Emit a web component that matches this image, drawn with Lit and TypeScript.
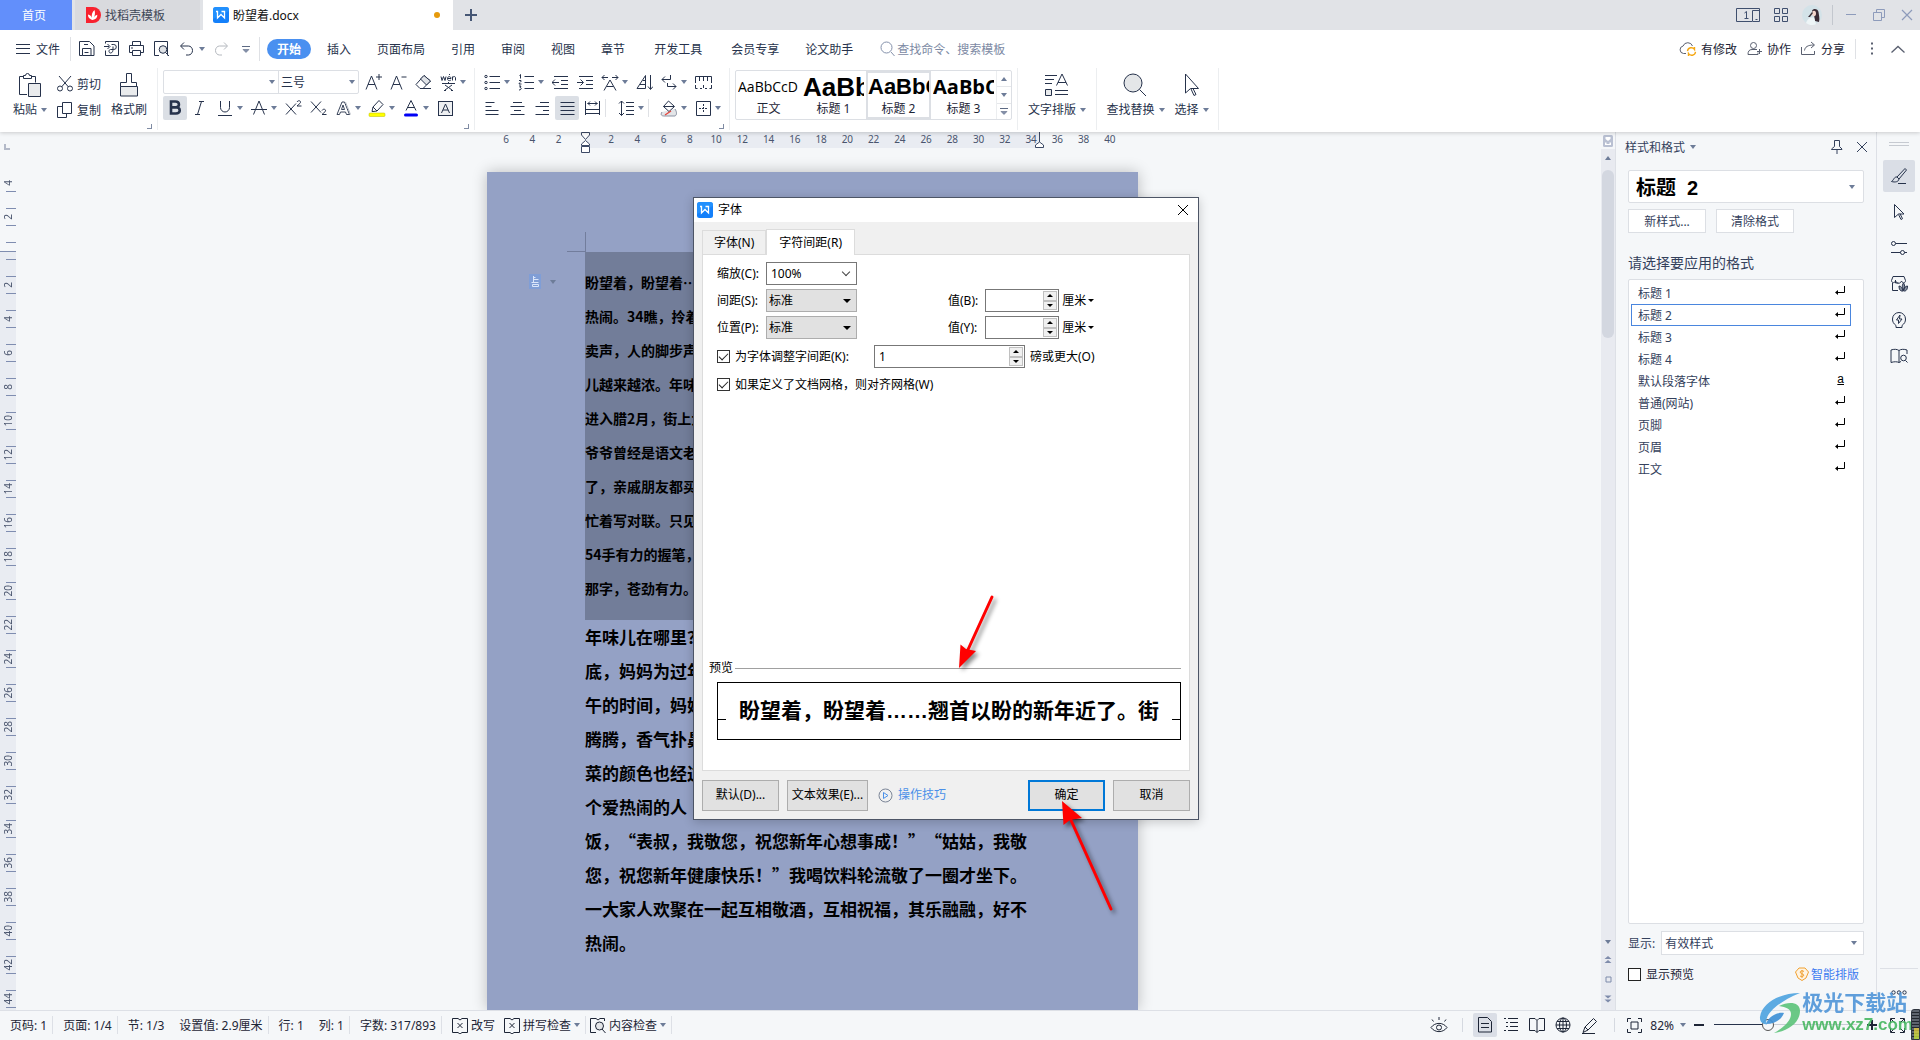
import { LitElement, html, css, svg, nothing, TemplateResult } from "lit";
import { customElement } from "lit/decorators.js";
import { classMap } from "lit/directives/class-map.js";

/* Icon bodies: [width, height, content] */
const ICONS: Record<string, [number, number, any]> = {
  w: [16, 16, svg`<rect width="16" height="16" rx="2.500" fill="#1480fa" stroke="none"/><path d="M0 2.500A2.500 2.500 0 0 1 2.500 0h11A2.500 2.500 0 0 1 16 2.500V4L0 12z" fill="#2b9bff" opacity=".6" stroke="none"/><path d="M3 4.500h1.500V11L8 7.500l3.500 3.500V4.500H8.500" stroke="#fff" stroke-width="1.300"/>`],
  docer: [16, 16, svg`<path d="M1 0h7a8 8 0 0 1 0 16H1z" fill="#f8222f" stroke="none"/><path d="M7.500 13C3.500 11.500 3 9.500 3 7.500c2 .3 3.600 1.800 4 3.500C6.300 8 7 5 9.500 3c1 3 .3 6-.8 8 .8-1.700 2-2.800 3.600-3.200.2 2.700-1.300 4.600-4.800 5.200z" fill="#fff" stroke="none"/>`],
  plus: [12, 12, svg`<path d="M6 0v12M0 6h12" stroke="#465775" stroke-width="2"/>`],
  task: [24, 14, svg`<path d="M16 13.500H.5V.5h23v13H16.500V2.500H23"/><path d="M19.500 11.500h2M8.500 5l2-1.500v7M8.500 10.500h4"/>`],
  grid4: [14, 14, svg`<path d="M.5.5h5v5h-5zM8.500.5h5v5h-5zM.5 8.500h5v5h-5zM8.500 8.500h5v5h-5z"/>`],
  avatar: [20, 20, svg`<circle cx="10" cy="10" r="10" fill="#d3e2e8" stroke="none"/><path d="M10 6c1-3 6-2.500 6.500 1 .3 3 1.500 6 .5 10l-4-1-1-6z" fill="#3a2b35" stroke="none"/><ellipse cx="12" cy="8.500" rx="2" ry="2.800" fill="#f3d6cc" stroke="none"/><path d="M4 18c1-4 4-6 8-5.500l2 6.500a9.500 9.500 0 0 1-10-1z" fill="#eef5f7" stroke="none"/><path d="M6 12 10 7l1 1-3 4z" fill="#3a3038" stroke="none"/>`],
  min: [12, 12, svg`<path d="M1 5.500h10" stroke="#8d9bbb"/>`],
  restore: [12, 12, svg`<path d="M.5 3.500h8v8h-8zM3.500 3V.5h8v8H9" stroke="#8d9bbb"/>`],
  closeLight: [12, 12, svg`<path d="M1 1l10 10M11 1 1 11" stroke="#8d9bbb" stroke-width="1.200"/>`],
  menu: [14, 12, svg`<path d="M0 1.500h14M0 5.500h14M0 10.500h14" />`],
  save: [16, 16, svg`<path d="M.5 14.500V.5h10l4.500 4.500v9.500h-3M.5 14.500h3v-7h8.500v7H3.500M5 3.500h4M5.500 11.500h4"/>`],
  pdf: [16, 16, svg`<path d="M1.500 9.500v5h13V.5h-13v2M0 5.500h5M3.500 3l2.500 2.500L3.500 8M7.500 3.500h2.300a2.500 2.500 0 0 1 0 5H6.500c-2 0-2 3.500 0 3.500s2.500-2 2.500-4V5.500"/>`],
  print: [16, 16, svg`<path d="M3.500 4.500v-4h8v4M3.500 11.500h-3v-7h14v7h-3M3.500 9.500h8v5h-8zM2 7h2"/>`],
  preview: [16, 16, svg`<path d="M5 14.500H.5V.5h13v14"/><circle cx="9" cy="8.500" r="3.800" fill="#dfe2e6"/><path d="m11.500 11.500 3.500 3.500"/>`],
  undo: [16, 16, svg`<path d="M5 1.500 1.500 5 5 8.500M2 5h7.500a4 4.500 0 0 1 0 9H7"/>`],
  redo: [16, 16, svg`<path d="M11 1.500 14.500 5 11 8.500M14 5H6.500a4 4.500 0 0 0 0 9H9" stroke="#b4b8be"/>`],
  more: [10, 9, svg`<path d="M1 1.500h8" stroke="#5d6a84"/><path d="M2 4.500h6L5 7.500z" fill="#8390aa" stroke="#5d6a84" stroke-width=".6"/>`],
  search: [16, 16, svg`<circle cx="6.500" cy="6.500" r="5.500" stroke="#8491ab"/><path d="m11 11 3.500 4" stroke="#8491ab"/>`],
  cloud: [18, 16, svg`<path d="M7 12.500H4.500a3.800 3.800 0 0 1-.4-7.500A5 5 0 0 1 13.500 5" stroke="#5a6070"/><path d="M8.500 10a3.800 3.800 0 0 1 7-1.500V6M16.500 11a3.800 3.800 0 0 1-7 1.500V15" stroke="#f5a712" stroke-width="1.400"/>`],
  collab: [16, 16, svg`<circle cx="6.500" cy="4.500" r="3" stroke="#5a6070"/><path d="M10 8.500H5c-3 0-4 2-4 5h10v-2M10 10.500h5M12.500 8v5" stroke="#5a6070"/>`],
  share: [16, 16, svg`<path d="M.5 6v7.500h13V10M3.500 9.500C4 6 6.500 4 13 4M10 1l3.500 3-3.500 3" stroke="#5a6070"/>`],
  dots: [3, 14, svg`<path d="M0 1.500h2M0 6.500h2M0 11.500h2" stroke="#5a6070" stroke-width="2"/>`],
  up: [14, 8, svg`<path d="m.5 7.500 6.500-6 6.500 6" stroke="#5a6070" stroke-width="1.300"/>`],
  paste: [22, 24, svg`<path d="M8 21.500H.5V3.500h4m8 0h4v6M4.500 2.500h2a2 2 0 0 1 4 0h2v3h-8z"/><path d="M9.500 10.500h12v13h-12z" fill="#e9ebed"/>`],
  cut: [16, 16, svg`<path d="M2 0l9.500 11M14 0 4.500 11"/><circle cx="3" cy="12.500" r="2.500"/><circle cx="13" cy="12.500" r="2.500"/>`],
  copy: [16, 16, svg`<path d="M5.500.5h9v11h-9zM5.500 4.500h-5v11h9v-4"/>`],
  brush: [18, 24, svg`<path d="M6.500.5h5v9h5v4H.5v-4h6z"/><path d="M.5 13.500h17v9.500h-17z" fill="#e9ebed"/>`],
  aplus: [17, 17, svg`<path d="M1 15.500 6.500 2l5.500 13.500M3 10.500h7M14 0v6M11 3h6"/>`],
  aminus: [17, 17, svg`<path d="M1 15.500 6.500 2l5.500 13.500M3 10.500h7M11.500 3h5"/>`],
  eraser: [17, 17, svg`<path d="M9 1.500 15.500 7 8 14.500H5L1 10.500z"/><path d="M9 1.500 15.500 7 11.500 11 5.500 5z" fill="#dfe2e6"/><path d="M7 14.500h9"/>`],
  wen: [17, 17, svg`<path d="M1 2.500l1 4 1.500-4 1.500 4 1-4M7.500 4.500h3.500c0-2.500-3.500-2.500-3.500 0s2 2.500 3.500 1.500M9 1l1-1M12.500 6.500v-4M12.500 4c.5-2 3-2 3 0v2.500M2 9.500h13M8.500 8v1.500M5 11l7 5M12 11l-7 5M4 16.500h2M11 16.500h2"/>`],
  bold: [14, 16, svg`<path d="M3 1.500v12h5c5 0 5-6 0-6.200C12 7 12 1.500 7.500 1.500zM3 7.400h5" stroke-width="2.600"/>`],
  italic: [14, 16, svg`<path d="M6 1.500h5M2 14.500h5M8.500 1.500l-4 13"/>`],
  under: [16, 17, svg`<path d="M3.500 1v6.500a4.500 4.500 0 0 0 9 0V1M1 15.500h14"/>`],
  strike: [16, 16, svg`<path d="M2.500 14.500 8 1l5.500 13.500M0 9.500h16"/>`],
  sup: [17, 16, svg`<path d="M1 3.500 11 14.500M11 3.500 1 14.500M12 2c1-2 4-1.500 3.500.5-.3 1-2 2-3.500 3.500h4.500"/>`],
  sub: [17, 16, svg`<path d="M1 1.500 11 12.500M11 1.500 1 12.500M12 10.500c1-2 4-1.500 3.500.5-.3 1-2 2-3.500 3.500h4.500"/>`],
  outlineA: [15, 15, svg`<path d="M1 13.500 6 1h2.500l5 12.500h-3L9.500 11h-5l-1 2.500zM5.500 8.500h3L7 4z" stroke-width=".9"/><path d="M9.500 1l5 12.500" stroke="#b9bec6"/>`],
  hilite: [18, 17, svg`<path d="M4 11.500 5 7l6-6.500 4 4-6 6.500-4 .5zM5 7l4 4"/><rect x="1" y="13" width="16" height="3.500" rx="1" fill="#ff0" stroke="#b8b800" stroke-width=".5"/>`],
  fontcolor: [16, 17, svg`<path d="M3 10.500 8 .5l5 10M5 7.500h6"/><path d="M2.500 15h11" stroke="#0000f5" stroke-width="3" stroke-linecap="round"/>`],
  boxA: [15, 15, svg`<rect x=".5" y=".5" width="14" height="14" fill="#eef0f2"/><path d="M3.500 12 7.500 3l4 9M5 9h5"/>`],
  bullets: [17, 17, svg`<path d="M5.500 2.500H16M5.500 8.500H16M5.500 14.500H16"/><circle cx="2" cy="2.500" r="1.200"/><circle cx="2" cy="8.500" r="1.200"/><circle cx="2" cy="14.500" r="1.200"/>`],
  numbering: [17, 17, svg`<path d="M6.500 2.500H16M6.500 8.500H16M6.500 14.500H16M1.500 1.500 2.500.5v4M1 6.500h2c1 1-2 2-2 3.500h2.500M1 12h2l-1 1.500c2 0 1.500 2.500-1 2.500"/>`],
  outdent: [17, 17, svg`<path d="M2 2.500h14M9 6.500h7M9 10.500h7M2 14.500h14M0 8.500h7M3 5.500l-3 3 3 3"/>`],
  indent: [17, 17, svg`<path d="M2 2.500h14M9 6.500h7M9 10.500h7M2 14.500h14M0 8.500h6M3.500 5.500l3 3-3 3"/>`],
  wide: [18, 17, svg`<path d="M3 16.500 9 6l6 10.500M5.500 12.500h7M1 3.500h6M3.500 1 1 3.500 3.500 6M17 3.500h-6M14.500 1 17 3.500 14.500 6"/>`],
  sort: [17, 17, svg`<path d="M1 14.500 9.500 1.500v13zM4 10.500h5M7 6.500h2.500M14.500 1v14M12 12.500l2.500 3 2.500-3"/>`],
  wrap: [17, 17, svg`<path d="M9.500 1v4.500H1M4 2.500 1 5.500l3 3M6.500 9v3.500H15M12 9.500l3 3-3 3"/>`],
  tabs: [17, 17, svg`<path d="M.5 9V2.500h16V9M4.500 3v4M8.500 3v4M12.500 3v4M.5 11v3.500h2M5 14.500h2M10 14.500h2M14.500 14.500h2V11M8.500 11v3"/>`],
  left: [15, 15, svg`<path d="M.5 1.500h9M.5 5.500h6M.5 9.500h13M.5 13.500h13"/>`],
  center: [15, 15, svg`<path d="M3 1.500h9M.5 5.500h14M4 9.500h7M.5 13.500h14"/>`],
  right: [15, 15, svg`<path d="M5 1.500h9M.5 5.500H14M8 9.500h6M.5 13.500H14"/>`],
  justify: [15, 15, svg`<path d="M.5 1.500h14M.5 5.500h14M.5 9.500h14M.5 13.500h14"/>`],
  distrib: [17, 16, svg`<path d="M1.500 1v14M15.500 1v14M3.500 3.500h10M6 1.500l-2 2 2 2M11 1.500l2 2-2 2M2 9.500h13M2 13.500h13"/>`],
  spacing: [17, 17, svg`<path d="M3.500 1v14.500M1 3.500l2.500-2.500L6 3.500M1 13l2.500 2.500L6 13M8 2.500h8M8 6.500h8M8 10.500h8M8 14.500h8"/>`],
  fill: [18, 17, svg`<path d="M2 12c-2 3 0 4 2 4h11c2-1 2-4 0-7" fill="#e3e5e8" stroke="#8b93a3"/><path d="M3.500 6.500 8.500 1l6 5.500-5.500 5z" fill="#fff"/><path d="M3.500 6.500h10.500" /><path d="m5 15 6-4" stroke="#e6463c" stroke-width="1.300"/>`],
  borders: [15, 15, svg`<path d="M.5.5h14v14H.5z"/><path d="M7.500 3v9M3 7.500h9" stroke-dasharray="2 1"/>`],
  layout: [24, 24, svg`<path d="M0 2.500h12M0 6.500h9M0 10.500h7M11.500 12.500 17 1l5.500 11.500M13 9.500h8M10 17.500h13M10 21.500h13"/><path d="M.5 16.500h6v6h-6z" fill="#e9ebed"/>`],
  find: [24, 24, svg`<circle cx="10" cy="10" r="9" fill="#e4e6e8"/><path d="m16.500 16.500 6.500 6.500"/>`],
  select: [16, 24, svg`<path d="M1.500 1v19l5-4.500h8zM7 16l3 6.500 2-1-3-6"/>`],
  pin: [14, 14, svg`<path d="M4.500.5h5v6l2.500 2.500v.5H1.500V9L4.500 6.500zM7 10v4"/>`],
  close: [12, 12, svg`<path d="M1 1l10 10M11 1 1 11"/>`],
  enter: [10, 10, svg`<path d="M9.500 0v6.500H2" stroke="#000"/><path d="M3 4v5L0 6.500z" fill="#000" stroke="none"/>`],
  pen: [18, 18, svg`<path d="m7 10 8-8.500 1.500 1.500L9 12zM7 10c-3-.5-3 3-5.500 4.500C5 15.500 8.500 15 9 12M8 16.500h8"/>`],
  arrow: [18, 18, svg`<path d="M4.500 1.500v13l4-3.500h5.500zM8.500 11.500l2.500 5 1.500-.8-2.500-5"/>`],
  sliders: [18, 18, svg`<path d="M5.500 4.500H17M1 13.500h9.500M14.500 13.500H17"/><circle cx="3.500" cy="4.500" r="2"/><circle cx="12.500" cy="13.500" r="2"/>`],
  shop: [18, 18, svg`<path d="M2.500 8v7.500H8M1.500 5.500 3 1.500h11l1.500 4c0 3-3 3-4 .5C10.500 9 7 9 5.500 6 4.500 8.500 1.500 8 1.500 5.500zM5.500 5v3h3"/><path d="M13.500 8c2 2.500 1 5 0 7-1-2-2-4.500 0-7zM9 11c2 0 3.500 2 4 5-3 .5-4-2-4-5zM17.500 11c-2 0-3.500 2-4 5 3 .5 4-2 4-5z" fill="#8b93a3"/>`],
  bulb: [18, 18, svg`<path d="M6 14.500C3.500 12.500 2.500 11 2.500 8a6.500 6.500 0 0 1 13 0c0 3-1 4.500-3.500 6.500v2H6zM10 4l-3.500 5h2v3.500L12 8H9.500z"/>`],
  bookfind: [18, 18, svg`<path d="M9 15.500c-2-1-5-1-8 0V3c3-1 6-1 8 .5C11 2 14 2 17 3v4M9 3.500v12l2-1"/><circle cx="13.500" cy="11" r="2.800"/><path d="m15.500 13.500 2 2"/>`],
  xbook: [16, 17, svg`<path d="M6 15.500H.5V1.500H6L8 3l2-1.500h5.500v14H10l-2 1.500zM5.500 6l5 5M10.500 6l-5 5"/>`],
  qbook: [16, 17, svg`<path d="M6 15.500H.5V1.500H6L8 3l2-1.500h4.500V4"/><circle cx="9.500" cy="9" r="4" fill="#e3e5e8"/><path d="m12 12 3.500 4"/>`],
  eye: [18, 17, svg`<path d="M1 10.500C5 5 13 5 17 10.500 13 16 5 16 1 10.500zM9 3V0M3.500 4.500l-1.500-2M14.500 4.500l1.500-2"/><circle cx="9" cy="10.500" r="2.500"/>`],
  page: [16, 16, svg`<path d="M1.500.5h9l4 4v10.500h-13zM4 6.500h8M4 10.500h8"/>`],
  outline: [16, 16, svg`<path d="M1 1.500h2M5 1.500h10M3 5.500h2M7 5.500h8M3 9.500h2M7 9.500h8M1 13.500h2M5 13.500h10"/>`],
  book: [16, 16, svg`<path d="M6 13.500H.5V1.500H6l2 2 2-2h5.500v12H10l-2 2zM8 3.500v12"/>`],
  globe: [16, 16, svg`<circle cx="8" cy="8" r="7"/><ellipse cx="8" cy="8" rx="3.500" ry="7"/><path d="M1 8h14M2 4.500h12M2 11.500h12M8 1v14"/>`],
  edit: [17, 17, svg`<path d="M4 10 12.500 1.500l3 3L7 13l-5 2.500zM4 10l3 3M1 16.500h13M11 9l-4 4"/>`],
  fit: [15, 15, svg`<path d="M.5 4V.5H4M11 .5h3.500V4M14.500 11v3.500H11M4 14.500H.5V11M4 4h7v7H4z"/>`],
  full: [15, 15, svg`<path d="M.5 5V.5H5M10 .5h4.500V5M14.500 10v4.500H10M5 14.500H.5V10M1 1l4 4M14 1l-4 4M14 14l-4-4M1 14l4-4"/>`],
  minus: [10, 2, svg`<path d="M0 1h10" stroke-width="2"/>`],
  zoomin: [10, 10, svg`<path d="M0 5h10M5 0v10" stroke-width="2"/>`],
  play: [15, 15, svg`<circle cx="7.500" cy="7.500" r="6.500" stroke="#7c8698"/><path d="M5.500 4.500v6l4.500-3z" stroke="#4a90e8"/>`],
  coin: [14, 14, svg`<path d="M4 1h6l3.500 4L11 11l-4 2.500L3 11 .5 5z" fill="#fff4e2" stroke="#f0a030"/><path d="M9 4.500C7 3 4.500 4 5.500 6c.5 1 3 .8 3.300 2C9 9.500 6.500 10 5 9M7 3v8" stroke="#f0a030"/>`],
  ruler: [10, 12, svg`<rect width="10" height="12" rx="1.500" fill="#b9c0d2" stroke="none"/><path d="M2.500 2h5v2L5 6 2.500 4zM2 10V7.500h1.500V9h3V7.500H8V10z" fill="#fff" stroke="none"/>`],
  dblUp: [8, 8, svg`<path d="M4 0l3.500 3h-7zM4 4l3.500 3h-7z" fill="#7f8cab" stroke="none"/>`],
  dblDown: [8, 8, svg`<path d="M4 3.500.5.5h7zM4 7.500l-3.500-3h7z" fill="#7f8cab" stroke="none"/>`],
  square: [7, 7, svg`<path d="M1 1h5v5H1z" stroke="#7f8cab"/>`],
  paraTag: [12, 15, svg`<path d="M0 0h12v15H0z" fill="#809ed6" stroke="none"/><path d="M4.500 2v7M4.500 3.500h2M4.500 5.500h5M2.500 8.500h7M3.500 10.500h6v2h-6z" stroke="#dbe6fa"/>`],
  ooo: [16, 5, svg`<circle cx="2.500" cy="2.500" r="1.700"/><circle cx="8" cy="2.500" r="1.700"/><circle cx="13.500" cy="2.500" r="1.700"/>`],
  indentTop: [9, 21, svg`<path d="M.5.500h8v2.500L4.500 7.500.5 3zM4.500 8.500l4 3.500v1.500h-8V12zM.5 14.500h8v6h-8z" fill="#fff"/>`],
};

const icon = (name: string): TemplateResult => {
  const [w, h, body] = ICONS[name];
  return html`<svg class="ic" width=${w} height=${h} viewBox="0 0 ${w} ${h}" aria-hidden="true">${body}</svg>`;
};

const caret = html`<i class="caret"></i>`;

interface Tool {
  icon: string;
  label: string;
  split?: boolean;
  on?: boolean;
  sepAfter?: boolean;
}

const t = (name: string, label: string, opts: Partial<Tool> = {}): Tool => ({ icon: name, label, ...opts });

const tool = (o: Tool) => html`<button
    class=${classMap({ tool: true, split: !!o.split, on: !!o.on })}
    aria-label=${o.label}><span class="cell">${icon(o.icon)}</span>${o.split ? caret : nothing}</button>${o.sepAfter ? html`<i class="tsep"></i>` : nothing}`;

const FONT_ROW_1 = [t("aplus", "增大字号"), t("aminus", "减小字号"), t("eraser", "清除格式"), t("wen", "拼音指南", { split: true })];
const FONT_ROW_2 = [
  t("bold", "加粗", { on: true }), t("italic", "倾斜"), t("under", "下划线", { split: true }), t("strike", "删除线", { split: true }),
  t("sup", "上标"), t("sub", "下标"), t("outlineA", "文字效果", { split: true }), t("hilite", "突出显示", { split: true }),
  t("fontcolor", "字体颜色", { split: true }), t("boxA", "字符底纹"),
];
const PARA_ROW_1 = [
  t("bullets", "项目符号", { split: true }), t("numbering", "编号", { split: true }), t("outdent", "减少缩进量"), t("indent", "增加缩进量"),
  t("wide", "中文版式", { split: true }), t("sort", "排序"), t("wrap", "换行", { split: true }), t("tabs", "制表位"),
];
const PARA_ROW_2 = [
  t("left", "左对齐"), t("center", "居中"), t("right", "右对齐"), t("justify", "两端对齐", { on: true }), t("distrib", "分散对齐", { sepAfter: true }),
  t("spacing", "行距", { split: true, sepAfter: true }), t("fill", "底纹颜色", { split: true }), t("borders", "边框", { split: true }),
];

const MENUS = ["插入", "页面布局", "引用", "审阅", "视图", "章节", "开发工具", "会员专享", "论文助手"];
const H_NUMBERS = [6, 4, 2, 0, ...Array.from({ length: 20 }, (_, i) => (i + 1) * 2)];
const V_NUMBERS = [4, 2, 0, ...Array.from({ length: 22 }, (_, i) => (i + 1) * 2)];

const SELECTED_LINES = [
  "盼望着，盼望着……", "热闹。34瞧，拎着", "卖声，人的脚步声", "儿越来越浓。年味", "进入腊2月，街上大",
  "爷爷曾经是语文老", "了，亲戚朋友都买", "忙着写对联。只见", "54手有力的握笔，", "那字，苍劲有力。",
];
const BODY_LINES = [
  "年味儿在哪里？", "底，妈妈为过年", "午的时间，妈妈", "腾腾，香气扑鼻", "菜的颜色也经过", "个爱热闹的人",
  "饭，“表叔，我敬您，祝您新年心想事成！”“姑姑，我敬",
  "您，祝您新年健康快乐！”我喝饮料轮流敬了一圈才坐下。",
  "一大家人欢聚在一起互相敬酒，互相祝福，其乐融融，好不",
  "热闹。",
];

const base = css`
  * { box-sizing: border-box; }
  button, input, select {
    font: inherit; color: inherit; margin: 0; padding: 0;
    border: 0; background: none; border-radius: 0; appearance: none; outline: none;
  }
  button { display: flex; align-items: center; justify-content: center; white-space: nowrap; }
  a { color: inherit; text-decoration: none; }
  ul { list-style: none; margin: 0; padding: 0; }
  i { display: block; flex: none; }
  .ic { display: block; flex: none; fill: none; stroke: currentColor; stroke-width: 1; }
  .caret { width: 0; height: 0; border: 3px solid transparent; border-top: 4px solid #6d7c98; border-bottom: 0; }
  .grow { flex: 1; }
`;

/* ---------- title bar, menu and ribbon ---------- */
@customElement("app-ribbon")
export class AppRibbon extends LitElement {
  static styles = [base, css`
    :host { display: block; background: #fff; color: #26324b; position: relative; z-index: 2; box-shadow: 0 1px 4px rgba(0, 0, 0, 0.18); }
    .title { display: flex; align-items: stretch; height: 30px; background: #e1e3e7; }
    .tab { display: flex; align-items: center; gap: 4px; padding: 0 10px; margin-right: 3px; font-size: 12px; }
    .home { width: 72px; padding-right: 14px; background: #628ffb; color: #fff; }
    .shop { width: 125px; background: #d9dade; justify-content: flex-start; color: #3e4757; }
    .doc { width: 250px; background: #fff; margin: 0; color: #111; justify-content: flex-start; }
    .dirty { width: 6px; height: 6px; border-radius: 3px; background: #e69a0c; margin-right: 3px; }
    .new { width: 36px; }
    .wins { display: flex; align-items: center; gap: 14px; padding-right: 7px; color: #3f4f6e; }
    .wsep { width: 1px; height: 20px; background: #c3c7ce; margin: 0 -2px 0 -4px; }
    .wins button { min-width: 12px; }
    .wins .gapped { margin-right: 2px; }
    .menu { display: flex; align-items: center; height: 38px; font-size: 12px; }
    .file { gap: 6px; padding: 0 10px 0 16px; }
    .vsep { width: 1px; height: 24px; background: #dfe1e5; margin-right: 4px; }
    .tool { width: 25px; height: 24px; justify-content: flex-start; border-radius: 2px; flex: none; }
    .split { width: 34px; }
    .cell { width: 24px; height: 24px; display: flex; align-items: center; justify-content: center; border-radius: 2px; flex: none; }
    .on .cell { background: #dbdfe5; }
    .tsep { width: 1px; height: 18px; background: #dfe1e5; margin: 0 8px 0 0; }
    .mtab { height: 20px; padding: 0 13px; }
    .mtab.spaced { margin-left: 3px; }
    .start { padding: 0 10px; margin: 0 3px; border-radius: 10px; background: #4a90f0; color: #fff; font-weight: 700; }
    .find { display: flex; align-items: center; gap: 1px; margin-left: 14px; color: #7c89a3; width: 160px; }
    .find input { width: 140px; height: 20px; font-size: 12px; }
    .find input::placeholder { color: #7c89a3; opacity: 1; }
    .acts { display: flex; align-items: center; gap: 10px; padding-right: 15px; color: #1d2536; }
    .acts button { gap: 4px; }
    .acts .msep { width: 1px; height: 20px; background: #dfe1e5; }
    .acts .kebab { margin: 0 7px 0 5px; }
    .ribbon { display: flex; height: 64px; font-size: 12px; }
    .group { display: flex; border-right: 1px solid #eceef0; height: 62px; padding: 2px 5px; position: relative; }
    .clip { width: 158px; padding: 4px 9px 0 13px; }
    .big { flex-direction: column; justify-content: flex-start; gap: 4px; line-height: 18px; height: 50px; }
    .big .art { height: 25px; display: flex; align-items: center; }
    .big .txt { display: flex; align-items: center; gap: 4px; }
    .pair { display: flex; flex-direction: column; gap: 2px; margin: 0 10px; }
    .pair button { height: 24px; gap: 4px; }
    .rows { display: flex; flex-direction: column; gap: 2px; }
    .row { display: flex; align-items: center; height: 24px; }
    .font { width: 317px; }
    .para { width: 255px; }
    .combo { display: flex; width: 196px; height: 24px; border: 1px solid #dcdfe4; border-radius: 2px; margin-right: 2px; }
    .combo label { display: flex; align-items: center; padding: 0 3px 0 2px; }
    .combo label:first-child { width: 115px; border-right: 1px solid #dcdfe4; }
    .combo label:last-child { flex: 1; }
    .combo input { width: 0; flex: 1; font-size: 12px; height: 20px; }
    .corner { position: absolute; right: 5px; bottom: 1px; width: 5px; height: 5px; border: solid #7f8ba3; border-width: 0 1px 1px 0; }
    .gallery { display: flex; width: 278px; height: 50px; border: 1px solid #dcdfe4; border-radius: 2px; }
    .style { flex-direction: column; width: 65px; height: 48px; overflow: hidden; border: 2px solid transparent; align-items: stretch; justify-content: flex-start; }
    .style.sel { border-color: #dcdfe4; }
    .sample { height: 28px; line-height: 28px; overflow: hidden; color: #000; text-align: left; font-family: "Open Sans", sans-serif; font-size: 14px; }
    .h1 { font: 700 26px/28px "Liberation Sans", sans-serif; }
    .h2 { font: 700 22px/28px "Liberation Sans", sans-serif; }
    .h3 { font: 700 20px/28px "Open Sans", sans-serif; }
    .name { line-height: 16px; text-align: center; color: #1d2536; }
    .scroll { display: flex; flex-direction: column; flex: 1; border-left: 1px solid #eceef0; }
    .scroll button { flex: 1; border-bottom: 1px solid #e6e8eb; }
    .scroll button:last-child { border: 0; }
    .flip { transform: rotate(180deg); }
    .g4 { width: 79px; justify-content: center; padding-top: 4px; }
    .g5 { width: 122px; justify-content: center; gap: 10px; padding-top: 4px; }
    .gal { width: 288px; }
  `];

  render() {
    return html`
      <header class="title">
        <button class="tab home">首页</button>
        <button class="tab shop">${icon("docer")}找稻壳模板</button>
        <button class="tab doc">${icon("w")}盼望着.docx<span class="grow"></span><i class="dirty"></i></button>
        <button class="new" aria-label="新建标签">${icon("plus")}</button>
        <span class="grow"></span>
        <div class="wins">
          <button aria-label="任务窗口">${icon("task")}</button>
          <button aria-label="应用">${icon("grid4")}</button>
          <button aria-label="账号">${icon("avatar")}</button>
          <i class="wsep"></i>
          <button class="gapped" aria-label="最小化">${icon("min")}</button>
          <button class="gapped" aria-label="还原">${icon("restore")}</button>
          <button aria-label="关闭">${icon("closeLight")}</button>
        </div>
      </header>
      <nav class="menu">
        <button class="file">${icon("menu")}文件</button><i class="vsep"></i>
        ${[t("save", "保存"), t("pdf", "输出为PDF"), t("print", "打印"), t("preview", "打印预览"), t("undo", "撤销", { split: true }), t("redo", "恢复"), t("more", "自定义")].map(tool)}
        <i class="vsep"></i>
        <button class="mtab start">开始</button>
        ${MENUS.map((m, i) => html`<button class=${classMap({ mtab: true, spaced: i === 6 || i === 7 })}>${m}</button>`)}
        <label class="find">${icon("search")}<input aria-label="查找命令" placeholder="查找命令、搜索模板" /></label>
        <span class="grow"></span>
        <div class="acts">
          <button>${icon("cloud")}有修改</button>
          <button>${icon("collab")}协作</button>
          <button>${icon("share")}分享</button>
          <i class="msep"></i>
          <button class="kebab" aria-label="更多">${icon("dots")}</button>
          <button aria-label="折叠功能区">${icon("up")}</button>
        </div>
      </nav>
      <div class="ribbon">
        <div class="group clip">
          <button class="big"><span class="art">${icon("paste")}</span><span class="txt">粘贴${caret}</span></button>
          <div class="pair"><button>${icon("cut")}剪切</button><button>${icon("copy")}复制</button></div>
          <button class="big"><span class="art">${icon("brush")}</span><span class="txt">格式刷</span></button>
          <i class="corner"></i>
        </div>
        <div class="group font"><div class="rows">
          <div class="row">
            <div class="combo">
              <label><input aria-label="字体" />${caret}</label>
              <label><input aria-label="字号" value="三号" />${caret}</label>
            </div>
            ${FONT_ROW_1.map(tool)}
          </div>
          <div class="row">${FONT_ROW_2.map(tool)}</div>
        </div><i class="corner"></i></div>
        <div class="group para"><div class="rows">
          <div class="row">${PARA_ROW_1.map(tool)}</div>
          <div class="row">${PARA_ROW_2.map(tool)}</div>
        </div><i class="corner"></i></div>
        <div class="group gal"><div class="gallery">
          <button class="style"><span class="sample">AaBbCcD</span><span class="name">正文</span></button>
          <button class="style"><span class="sample h1">AaBb</span><span class="name">标题 1</span></button>
          <button class="style sel"><span class="sample h2">AaBbC</span><span class="name">标题 2</span></button>
          <button class="style"><span class="sample h3">AaBbCc</span><span class="name">标题 3</span></button>
          <div class="scroll">
            <button aria-label="上一行"><i class="caret flip"></i></button>
            <button aria-label="下一行">${caret}</button>
            <button aria-label="展开样式">${icon("more")}</button>
          </div>
        </div></div>
        <div class="group g4"><button class="big"><span class="art">${icon("layout")}</span><span class="txt">文字排版${caret}</span></button></div>
        <div class="group g5">
          <button class="big"><span class="art">${icon("find")}</span><span class="txt">查找替换${caret}</span></button>
          <button class="big"><span class="art">${icon("select")}</span><span class="txt">选择${caret}</span></button>
        </div>
      </div>`;
  }
}

/* ---------- document canvas with rulers ---------- */
@customElement("doc-canvas")
export class DocCanvas extends LitElement {
  static styles = [base, css`
    :host { display: flex; flex: 1; min-width: 0; background: #f5f7f9; overflow: hidden; }
    .vruler { width: 16px; flex: none; overflow: hidden; padding-top: 12px; background: linear-gradient(#f5f7f9 119px, #e9ecf2 119px); }
    .tabmark { width: 6px; height: 6px; margin: 0 0 16px 4px; border: solid #b3b9c8; border-width: 0 0 2px 2px; }
    .vcell { height: 34px; display: flex; align-items: center; padding-left: 3px; background:
      linear-gradient(#7f8db0, #7f8db0) 6px 8px / 10px 1px no-repeat,
      linear-gradient(#7f8db0, #7f8db0) 6px 25px / 10px 1px no-repeat; }
    .vcell.first { background: linear-gradient(#7f8db0, #7f8db0) 6px 25px / 10px 1px no-repeat; }
    .vcell.zero { background:
      linear-gradient(#7f8db0, #7f8db0) 6px 8px / 10px 1px no-repeat,
      linear-gradient(#7f8db0, #7f8db0) 0 17px / 16px 1px no-repeat,
      linear-gradient(#7f8db0, #7f8db0) 6px 25px / 10px 1px no-repeat; }
    .vcell span { writing-mode: vertical-rl; transform: rotate(180deg); font-size: 10px; line-height: 10px; color: #4a556e; }
    .main { flex: 1; min-width: 0; display: flex; flex-direction: column; align-items: center; padding-left: 8px; }
    .hruler { width: 651px; height: 16px; position: relative; flex: none; padding: 0 15px 0 6px; display: grid; grid-template-columns: repeat(24, 1fr);
      background: linear-gradient(90deg, transparent 98px, #e9ecf2 98px, #e9ecf2 552px, transparent 552px); }
    .hruler span { font-size: 10px; line-height: 15px; text-align: center; color: #4a556e; }
    .mark { position: absolute; left: 94px; top: 0; color: #3d4a66; }
    .rmark { position: absolute; left: 548px; top: 0; color: #3d4a66; }
    .page { width: 651px; flex: 1; margin-top: 24px; background: #94a1c5; box-shadow: 0 0 14px rgba(0, 0, 0, 0.24); padding: 80px 98px 0; position: relative; }
    .crop { position: absolute; left: 80px; top: 60px; width: 19px; height: 20px; border: solid #727d9c; border-width: 0 1px 1px 0; }
    .tag { position: absolute; left: 42px; top: 102px; display: flex; align-items: center; gap: 9px; }
    p { margin: 0; color: #000; font-weight: 700; white-space: nowrap; line-height: 34px; text-spacing-trim: space-all; font-family: "Noto Sans CJK SC", sans-serif; }
    .seld { background: #727d99; padding: 13px 0 15px; font-size: 14px; }
    .body { font-size: 17px; }
    .line { display: block; height: 34px; }
    .sbar { width: 15px; flex: none; display: flex; flex-direction: column; align-items: center; padding-top: 3px; border-right: 1px solid #dde0e6;
      background: linear-gradient(#f5f7f9 17px, #e8eaf0 17px); }
    .arrowup { transform: rotate(180deg); margin: 9px 0 10px; }
    .thumb { width: 12px; height: 168px; border-radius: 6px; background: #d3d7e0; }
    .stack { display: flex; flex-direction: column; align-items: center; gap: 12px; padding-bottom: 7px; }
  `];

  render() {
    return html`
      <div class="vruler"><i class="tabmark"></i>${V_NUMBERS.map((n, i) => html`<div class=${classMap({ vcell: true, first: i === 0, zero: n === 0 })}>${n ? html`<span>${n}</span>` : nothing}</div>`)}</div>
      <div class="main">
        <div class="hruler">
          ${H_NUMBERS.map((n) => html`<span>${n || nothing}</span>`)}
          <div class="mark">${icon("indentTop")}</div>
          <svg class="ic rmark" width="9" height="16" viewBox="0 0 9 16" aria-hidden="true"><path d="M4.500 0v10l4 3v2.500h-8V13l4-3" fill="#fff"/></svg>
        </div>
        <article class="page">
          <i class="crop"></i>
          <div class="tag">${icon("paraTag")}${caret}</div>
          <p class="seld">${SELECTED_LINES.map((l) => html`<span class="line">${l}</span>`)}</p>
          <p class="body">${BODY_LINES.map((l) => html`<span class="line">${l}</span>`)}</p>
        </article>
      </div>
      <div class="sbar">
        ${icon("ruler")}<i class="caret arrowup"></i><i class="thumb"></i><span class="grow"></span>
        <div class="stack">${caret}${icon("dblUp")}${icon("square")}${icon("dblDown")}</div>
      </div>`;
  }
}

/* ---------- styles panel and side rail ---------- */
@customElement("style-panel")
export class StylePanel extends LitElement {
  static styles = [base, css`
    :host { display: flex; width: 304px; flex: none; background: #f5f7f9; color: #34415c; font-size: 12px; }
    .panel { width: 261px; border-right: 1px solid #dde0e6; display: flex; flex-direction: column; padding: 0 12px; }
    .head { display: flex; align-items: center; height: 30px; gap: 5px; margin-left: -3px; }
    .head .pin { margin-right: 7px; }
    .head .x { margin-right: -4px; }
    .current { display: flex; align-items: center; height: 33px; margin-top: 8px; background: #fff; border: 1px solid #dcdfe4; border-radius: 2px; padding: 0 8px 0 7px; }
    .current input { flex: 1; width: 0; height: 30px; font: 700 20px "Liberation Sans", "Noto Sans CJK SC", sans-serif; color: #000; }
    .btns { display: flex; gap: 10px; margin-top: 6px; }
    .btns button { width: 78px; height: 24px; border: 1px solid #dcdfe4; background: #fff; }
    h2 { font-weight: 400; font-size: 14px; line-height: 20px; margin: 20px 0 6px; }
    .list { flex: 1; background: #fff; border: 1px solid #dcdfe4; border-radius: 2px; padding: 2px 12px 0 2px; }
    .list li { display: flex; align-items: center; justify-content: space-between; height: 22px; padding: 0 5px 0 6px; border: 1px solid transparent; }
    .list .sel { border-color: #4a86de; }
    .list .ic { margin-bottom: 5px; }
    .list u { color: #000; font: 12px/12px "Liberation Sans", sans-serif; margin: 0 1px 4px 0; }
    .show { display: flex; align-items: center; gap: 6px; margin-top: 7px; height: 24px; }
    .sel-wrap { flex: 1; display: flex; align-items: center; background: #fff; border: 1px solid #dcdfe4; height: 24px; padding: 0 6px 0 3px; }
    .sel-wrap select { flex: 1; font-size: 12px; height: 22px; }
    .foot { display: flex; align-items: center; height: 38px; margin-bottom: 17px; }
    .foot label { display: flex; align-items: center; gap: 5px; color: #1d2536; }
    .foot input { width: 13px; height: 13px; border: 1px solid #222; background: #fff; }
    .foot a { display: flex; align-items: center; gap: 2px; color: #3d7bf0; margin-right: 5px; }
    .rail { flex: 1; display: flex; flex-direction: column; align-items: center; padding-top: 10px; }
    .grip { width: 20px; height: 4px; border: solid #c6cad1; border-width: 1px 0; margin-bottom: 14px; }
    .rail button { width: 32px; height: 32px; margin-bottom: 4px; color: #26324b; }
    .rail .on { background: #dadee6; border-radius: 2px; }
    .line { width: 38px; height: 1px; background: #dde0e6; margin-bottom: 13px; }
    .rail .last { height: 20px; margin-bottom: 8px; }
  `];

  render() {
    const items = ["标题 1", "标题 2", "标题 3", "标题 4", "默认段落字体", "普通(网站)", "页脚", "页眉", "正文"];
    return html`
      <aside class="panel">
        <div class="head">样式和格式${caret}<span class="grow"></span>
          <button class="pin" aria-label="固定">${icon("pin")}</button><button class="x" aria-label="关闭">${icon("close")}</button></div>
        <label class="current"><input aria-label="当前样式" .value=${"标题  2"} />${caret}</label>
        <div class="btns"><button>新样式...</button><button>清除格式</button></div>
        <h2>请选择要应用的格式</h2>
        <ul class="list">${items.map((s, i) => html`<li class=${classMap({ sel: i === 1 })}>${s}${i === 4 ? html`<u>a</u>` : icon("enter")}</li>`)}</ul>
        <div class="show"><label for="show">显示:</label><div class="sel-wrap"><select id="show"><option>有效样式</option></select>${caret}</div></div>
        <div class="foot"><label><input type="checkbox" />显示预览</label><span class="grow"></span><a href="#">${icon("coin")}智能排版</a></div>
      </aside>
      <nav class="rail">
        <i class="grip"></i>
        ${[["pen", "样式"], ["arrow", "选择"], ["sliders", "设置"], ["shop", "素材"], ["bulb", "推荐"], ["bookfind", "查找"]].map(
          ([n, l], i) => html`<button class=${classMap({ on: i === 0 })} aria-label=${l}>${icon(n)}</button>`)}
        <span class="grow"></span>
        <i class="line"></i>
        <button class="last" aria-label="更多">${icon("ooo")}</button>
      </nav>`;
  }
}

/* ---------- font dialog ---------- */
@customElement("font-dialog")
export class FontDialog extends LitElement {
  static styles = [base, css`
    :host { display: flex; flex-direction: column; width: 506px; height: 623px; background: #f0f0f0; border: 1px solid #4d5566; color: #000; font-size: 12px; line-height: 16px; box-shadow: 0 2px 10px rgba(0, 0, 0, 0.2); }
    .bar { display: flex; align-items: center; height: 24px; background: #fff; padding: 0 9px 0 3px; gap: 5px; }
    .tabs { display: flex; align-items: flex-end; height: 32px; padding: 0 8px; }
    .tab { height: 24px; border: 1px solid #dcdcdc; border-bottom: 0; background: #f0f0f0; padding: 0 11px; }
    .tab.on { height: 26px; background: #fff; padding: 0 12px; position: relative; margin-bottom: -1px; }
    .panel { flex: 1; margin: 0 8px; background: #fff; border: 1px solid #dcdcdc; padding: 7px 8px 0 6px; display: flex; flex-direction: column; }
    .form { display: grid; grid-template-columns: 49px 91px 75px auto auto auto; align-items: center; row-gap: 4px; justify-content: start; padding-left: 8px; }
    .form > * { height: 23px; }
    .form label { display: flex; align-items: center; }
    .pick { display: flex; align-items: center; border: 1px solid #adadad; background: #e1e1e1; padding: 0 5px 0 2px; }
    .pick.plain { background: #fff; border-color: #777; padding-left: 4px; }
    .pick select, .pick input { flex: 1; width: 0; height: 21px; }
    .black { border-width: 4px 4px 0; border-top-color: #000; }
    .small { border-width: 3px 3px 0; border-top-color: #000; }
    .flip { transform: rotate(180deg); }
    .chev { width: 6px; height: 6px; border: solid #444; border-width: 0 1px 1px 0; transform: rotate(45deg); margin: 0 2px 4px 0; }
    .spin { display: flex; border: 1px solid #777; background: #fff; padding: 1px; width: 74px; height: 23px; }
    .spin input { flex: 1; width: 0; height: 19px; padding-left: 3px; }
    .ud { display: flex; flex-direction: column; width: 14px; }
    .ud button { flex: 1; border: 1px solid #c0c0c0; background: #f0f0f0; }
    .unit { gap: 2px; padding-left: 3px; }
    .mid { padding-left: 16px; margin-right: 7px; }
    .opt { display: flex; align-items: center; height: 23px; padding-left: 8px; margin-top: 6px; }
    .opt + .opt { margin-top: 5px; }
    .opt label { display: flex; align-items: center; gap: 5px; }
    .opt .chk { width: 13px; height: 13px; border: 1px solid #333; background: #fff; margin: 0; display: grid; place-items: center; }
    .opt .chk:checked::before { content: ""; width: 8px; height: 4px; border: solid #222; border-width: 0 0 1px 1px; transform: rotate(-45deg); margin-bottom: 3px; }
    .kern { width: 157px; }
    .wide { width: 151px; margin-right: 5px; }
    .legend { display: flex; align-items: center; gap: 2px; margin-bottom: 6px; }
    .legend i { flex: 1; height: 1px; background: #a0a0a0; }
    .preview { display: flex; align-items: center; justify-content: center; height: 58px; border: 1px solid #000; margin: 0 0 30px 8px;
      font: 700 21px/30px "Liberation Sans", "Noto Sans CJK SC", sans-serif; white-space: nowrap; text-spacing-trim: space-all;
      background: linear-gradient(#000, #000) 0 36px / 8px 1px no-repeat, linear-gradient(#000, #000) 100% 36px / 8px 1px no-repeat; }
    .foot { display: flex; align-items: center; height: 48px; gap: 8px; padding: 0 8px; }
    .foot button { width: 77px; height: 31px; border: 1px solid #adadad; background: #e1e1e1; }
    .foot .fx { width: 81px; }
    .foot .ok { border: 2px solid #0078d7; }
    .foot a { display: flex; align-items: center; gap: 5px; color: #4a90e8; margin-left: 2px; }
  `];

  private spin(label: string, value = "", wide = false) {
    return html`<div class=${classMap({ spin: true, wide })}><input id=${label} aria-label=${label} value=${value} />
      <div class="ud"><button aria-label="增加"><i class="caret small flip"></i></button><button aria-label="减少"><i class="caret small"></i></button></div></div>`;
  }

  render() {
    return html`
      <div class="bar">${icon("w")}<span>字体</span><span class="grow"></span><button aria-label="关闭">${icon("close")}</button></div>
      <div class="tabs"><button class="tab">字体(N)</button><button class="tab on">字符间距(R)</button></div>
      <div class="panel">
        <div class="form">
          <label for="scale">缩放(C):</label>
          <div class="pick plain"><input id="scale" value="100%" /><i class="chev"></i></div>
          <span></span><span></span><span></span><span></span>
          <label for="gap">间距(S):</label>
          <div class="pick"><select id="gap"><option>标准</option></select><i class="caret black"></i></div>
          <span></span><label class="mid" for="值B">值(B):</label>${this.spin("值B")}<button class="unit">厘米<i class="caret small"></i></button>
          <label for="pos">位置(P):</label>
          <div class="pick"><select id="pos"><option>标准</option></select><i class="caret black"></i></div>
          <span></span><label class="mid" for="值Y">值(Y):</label>${this.spin("值Y")}<button class="unit">厘米<i class="caret small"></i></button>
        </div>
        <div class="opt"><label class="kern"><input class="chk" type="checkbox" checked />为字体调整字间距(K):</label>${this.spin("磅", "1", true)}<label for="磅">磅或更大(O)</label></div>
        <div class="opt"><label><input class="chk" type="checkbox" checked />如果定义了文档网格，则对齐网格(W)</label></div>
        <span class="grow"></span>
        <div class="legend">预览<i></i></div>
        <div class="preview">盼望着，盼望着……翘首以盼的新年近了。街</div>
      </div>
      <div class="foot">
        <button>默认(D)...</button><button class="fx">文本效果(E)...</button>
        <a href="#">${icon("play")}操作技巧</a><span class="grow"></span>
        <button class="ok">确定</button><button>取消</button>
      </div>`;
  }
}

/* ---------- status bar ---------- */
@customElement("status-bar")
export class StatusBar extends LitElement {
  static styles = [base, css`
    :host { display: flex; align-items: center; height: 30px; flex: none; border-top: 1px solid #dde0e6; padding-bottom: 1px; background: #f5f7f9; color: #1d2536; font-size: 12px; white-space: nowrap; }
    .item { padding: 0 5px 0 10px; height: 18px; display: flex; align-items: center; gap: 3px; }
    .bar { border-right: 1px solid #dde0e6; }
    .tight { padding-left: 4px; }
    .views { display: flex; align-items: center; }
    .views button { width: 26px; height: 24px; }
    .views .on { background: #dadee6; border-radius: 2px; width: 24px; margin-right: 1px; }
    .sep { width: 1px; height: 14px; background: #d5d9e0; margin: 0 12px; }
    .sep.near { margin: 0 10px; }
    .zoom { display: flex; align-items: center; gap: 8px; padding-right: 15px; }
    .zoom .pct { gap: 6px; }
    .zoom input { width: 143px; height: 14px; margin: 0 2px; background: linear-gradient(90deg, #26324b 37%, #c9cdd6 37%) 0 6px / 100% 1px no-repeat; }
    .zoom input::-webkit-slider-thumb { appearance: none; width: 12px; height: 12px; border-radius: 6px; border: 1px solid #555; background: #f5f7f9; }
    .zoom .fs { margin-left: 5px; }
  `];

  render() {
    return html`
      <span class="item bar">页码: 1</span><span class="item bar">页面: 1/4</span><span class="item">节: 1/3</span>
      <span class="item bar">设置值: 2.9厘米</span><span class="item">行: 1</span><span class="item bar">列: 1</span>
      <span class="item bar">字数: 317/893</span>
      <button class="item">${icon("xbook")}改写</button>
      <button class="item bar tight">${icon("xbook")}拼写检查${caret}</button>
      <button class="item bar tight">${icon("qbook")}内容检查${caret}</button>
      <span class="grow"></span>
      <div class="views">
        <button aria-label="护眼模式">${icon("eye")}</button><i class="sep near"></i>
        <button class="on" aria-label="页面视图">${icon("page")}</button>
        <button aria-label="大纲">${icon("outline")}</button>
        <button aria-label="阅读版式">${icon("book")}</button>
        <button aria-label="Web版式">${icon("globe")}</button>
        <button aria-label="写作模式">${icon("edit")}</button><i class="sep"></i>
      </div>
      <div class="zoom">
        <button aria-label="最佳显示比例">${icon("fit")}</button>
        <button class="pct">82%${caret}</button>
        <button aria-label="缩小">${icon("minus")}</button>
        <input type="range" aria-label="缩放" min="0" max="100" value="37" />
        <button aria-label="放大">${icon("zoomin")}</button>
        <button class="fs" aria-label="全屏">${icon("full")}</button>
      </div>`;
  }
}

/* ---------- application shell ---------- */
@customElement("app-root")
export class AppRoot extends LitElement {
  static styles = [base, css`
    :host { display: flex; flex-direction: column; height: 100vh; position: relative; overflow: hidden; font-family: "Noto Sans", "Noto Sans CJK SC", sans-serif; font-size: 12px; }
    .work { flex: 1; min-height: 0; display: flex; }
    .dialog { position: absolute; left: 693px; top: 197px; z-index: 3; }
    .arrows { position: absolute; left: 940px; top: 580px; z-index: 4; pointer-events: none; filter: drop-shadow(3px 3px 2px rgba(0, 0, 0, 0.45)); }
    .mark { position: absolute; right: 7px; bottom: 5px; z-index: 4; display: flex; align-items: center; gap: 1px; pointer-events: none; opacity: 0.9; }
    .mark strong { display: block; color: #4f95d8; font-size: 21px; line-height: 25px; font-weight: 700; }
    .mark span { display: block; color: #48b762; font: 700 17px/20px "Liberation Sans", sans-serif; }
    .gauge { position: absolute; right: 0; bottom: 0; z-index: 5; width: 9px; height: 31px; border-radius: 3px 0 0 0; border: 1px solid #2f3540; background:
      linear-gradient(transparent 18px, rgba(255, 214, 60, 0.7) 18px, rgba(190, 230, 60, 0.8)) 2px 0 / 5px 100% no-repeat,
      repeating-linear-gradient(#5d636e 0 2px, #22262e 2px 3px); }
  `];

  render() {
    return html`
      <app-ribbon></app-ribbon>
      <div class="work"><doc-canvas></doc-canvas><style-panel></style-panel></div>
      <status-bar></status-bar>
      <font-dialog class="dialog" role="dialog" aria-label="字体"></font-dialog>
      <svg class="arrows" width="190" height="345" viewBox="0 0 190 345" aria-hidden="true">
        <path d="M52 17 26 74" stroke="#f00" stroke-width="3" stroke-linecap="round"/>
        <path d="M19 88 20.500 64.500 26 69 36 71z" fill="#f00"/>
        <path d="M171 329 130 238" stroke="#f00" stroke-width="3" stroke-linecap="round"/>
        <path d="M122 221 123.500 245 130 240 142 238z" fill="#f00"/>
      </svg>
      <div class="mark">
        <svg width="42" height="42" viewBox="0 0 42 42" aria-hidden="true">
          <path d="M41 1C22 1 3 10 1 25c-.6 5 3 7.500 7 7.500C4 25 16 11 41 1z" fill="#4da3e0"/>
          <path d="M20 14c10-5 21-4 21 5 0 11-11 20-26 22 9-5 17-12 17-19 0-5-5-7-12-8z" fill="#5cc47a"/>
          <path d="M7 32c2-7 10-12 18-11-2 6-9 11-18 11z" fill="#3d8fd6"/>
        </svg>
        <div><strong>极光下载站</strong><span>www.xz7.com</span></div>
      </div>
      <i class="gauge"></i>`;
  }
}
